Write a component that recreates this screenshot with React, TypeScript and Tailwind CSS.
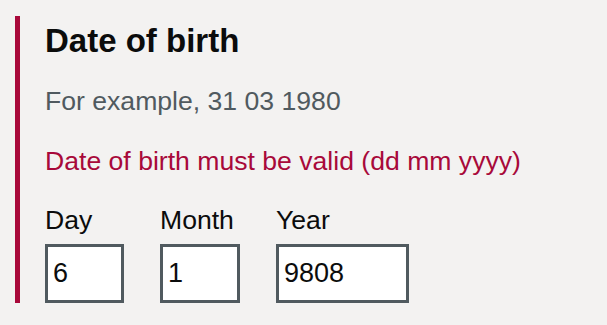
import { useState } from "react";

const font = { fontFamily: '"Liberation Sans", Arial, sans-serif' };

function DateField({ label, value, width }: { label: string; value: string; width: string }) {
  const [val, setVal] = useState(value);
  return (
    <div className="flex flex-col">
      <label className="text-[26.6px] leading-[32px] text-[#0b0c0c]">{label}</label>
      <input
        value={val}
        onChange={(e) => setVal(e.target.value)}
        className={`mt-[8px] h-[59px] ${width} border-[3px] border-[#505a5f] bg-white px-[5px] text-[27px] text-[#0b0c0c] outline-none`}
        style={font}
        inputMode="numeric"
      />
    </div>
  );
}

export default function App() {
  return (
    <div className="w-[607px] h-[325px] bg-[#f3f2f1] pt-[16px] pl-[15px]" style={font}>
      <fieldset className="border-l-[5px] border-[#a8093a] pl-[25px] pt-[5px]">
        <legend className="contents">
          <h1 className="text-[33px] leading-[40px] font-bold text-[#0b0c0c]">Date of birth</h1>
        </legend>
        <p className="mt-[24px] text-[26.6px] leading-[32px] text-[#505a5f]">For example, 31 03 1980</p>
        <p className="mt-[28px] text-[26.6px] leading-[32px] text-[#a8093a]">
          Date of birth must be valid (dd mm yyyy)
        </p>
        <div className="mt-[27px] flex gap-[36px]">
          <DateField label="Day" value="6" width="w-[79px]" />
          <DateField label="Month" value="1" width="w-[80px]" />
          <DateField label="Year" value="9808" width="w-[133px]" />
        </div>
      </fieldset>
    </div>
  );
}
